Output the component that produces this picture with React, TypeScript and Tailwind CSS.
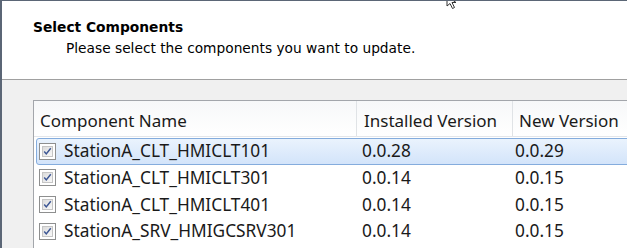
import React from 'react'

type Row = { name: string; installed: string; next: string; selected?: boolean }

const rows: Row[] = [
  { name: 'StationA_CLT_HMICLT101', installed: '0.0.28', next: '0.0.29', selected: true },
  { name: 'StationA_CLT_HMICLT301', installed: '0.0.14', next: '0.0.15' },
  { name: 'StationA_CLT_HMICLT401', installed: '0.0.14', next: '0.0.15' },
  { name: 'StationA_SRV_HMIGCSRV301', installed: '0.0.14', next: '0.0.15' },
]

function CheckBox() {
  return (
    <div className="w-[17px] h-[17px] shrink-0 border border-[#8e8f8f] bg-white p-[2px]">
      <div className="w-full h-full border border-[#c5c5c5] bg-gradient-to-br from-[#dcdcdc] to-[#f8f8f8] flex items-center justify-center">
        <svg width="11" height="11" viewBox="0 0 11 11">
          <path d="M1.5 5.5 L4 8.5 L9.5 1.5" fill="none" stroke="#3c5694" strokeWidth="1.8" />
        </svg>
      </div>
    </div>
  )
}

export default function App() {
  return (
    <div className="relative w-[627px] h-[248px] overflow-hidden flex flex-col border-t border-l-2 border-[#5b6676] bg-[#f0f0f0]">
      {/* cursor */}
      <svg className="absolute left-[444px] top-[-6px]" width="16" height="16" viewBox="0 0 16 16">
        <path d="M1 1 L1 11 L4 8.5 L6.5 13.5 L8.5 12.5 L6 7.5 L10 7.5 Z" fill="#fff" stroke="#333" strokeWidth="1" />
      </svg>

      <div className="h-[79px] shrink-0 bg-white border-b border-[#a0a0a0] pl-[31px] pt-[16px] font-['DejaVu_Sans',sans-serif] text-black">
        <div className="text-[13.8px] font-bold leading-[20px]">Select Components</div>
        <div className="text-[13.75px] leading-[20px] pl-[33px] pt-[1px] whitespace-nowrap">Please select the components you want to update.</div>
      </div>

      <div className="flex-1 pl-[31px] pt-[20px]">
        <div className="w-[700px] h-full bg-white border-l border-t border-[#a3a6ab] font-['Noto_Sans',sans-serif] text-[#1a1a1a]">
          <div className="flex h-[36px] border-b border-[#e3e6ea] bg-gradient-to-b from-[#f7f8f9] to-white text-[17px]">
            <div className="w-[323px] shrink-0 pl-[6px] pt-[5px] flex items-center border-r border-[#e0e3e6]">Component Name</div>
            <div className="w-[156px] shrink-0 pl-[7px] pt-[5px] flex items-center border-r border-[#e0e3e6] whitespace-nowrap">Installed Version</div>
            <div className="flex-1 pl-[6px] pt-[5px] flex items-center whitespace-nowrap">New Version</div>
          </div>
          <div className="pt-[1px] text-[17.3px]">
            {rows.map((r) => (
              <div
                key={r.name}
                className={`flex items-center h-[26.67px] ml-[2px] ${
                  r.selected
                    ? 'border border-[#84acdd] rounded-[3px] bg-gradient-to-b from-[#eaf3fd] to-[#d3e4fa]'
                    : 'border border-transparent'
                }`}
              >
                <div className="w-[320px] shrink-0 flex items-center pl-[2px] gap-[8px] whitespace-nowrap">
                  <CheckBox />
                  <span>{r.name}</span>
                </div>
                <div className="w-[154px] shrink-0 pl-[5px]">{r.installed}</div>
                <div className="flex-1 pl-[4px]">{r.next}</div>
              </div>
            ))}
          </div>
        </div>
      </div>
    </div>
  )
}
